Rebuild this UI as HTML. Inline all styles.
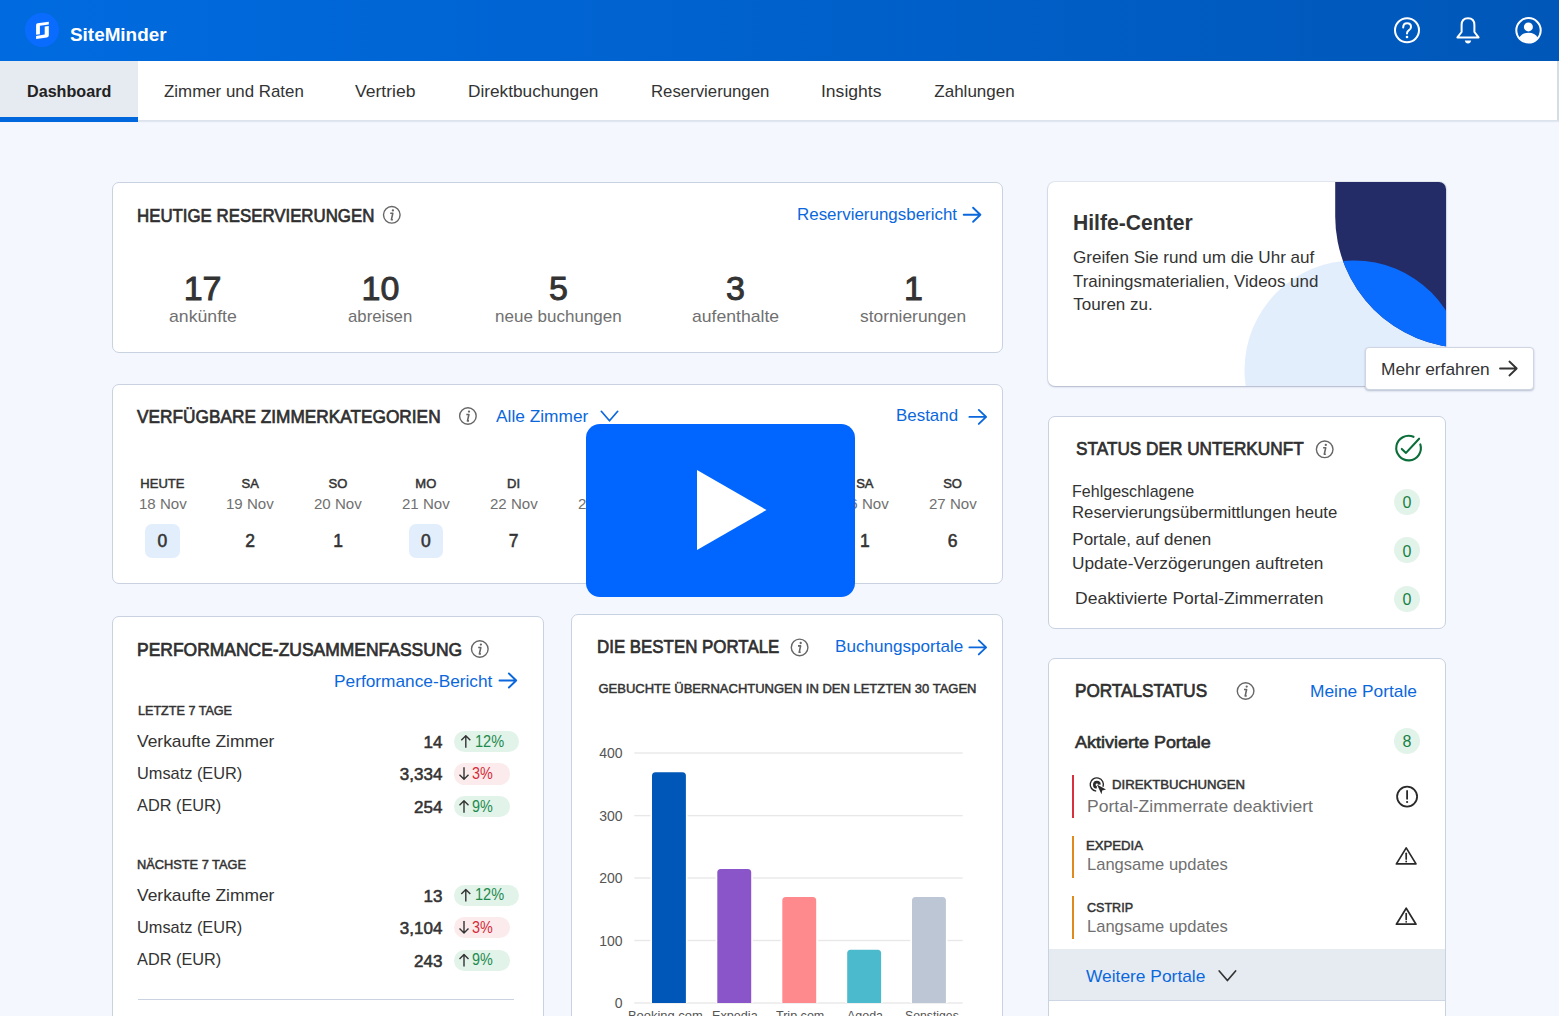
<!DOCTYPE html>
<html><head><meta charset="utf-8">
<style>
*{box-sizing:border-box;margin:0;padding:0}
html,body{width:1559px;height:1016px;overflow:hidden}
body{background:#f4f7fe;font-family:"Liberation Sans",sans-serif;color:#333;position:relative}
.a{position:absolute}
.t{position:absolute;line-height:1;white-space:nowrap}
.card{position:absolute;background:#fff;border:1px solid #c9d2e0;border-radius:7px}
svg{position:absolute;overflow:visible}
</style></head><body>
<div class="a" style="left:0;top:0;width:1559px;height:61px;background:linear-gradient(90deg,#006be0 0%,#0063d0 40%,#0057b8 100%)"></div>
<div class="a" style="left:25.2px;top:13.2px;width:34px;height:34px;border-radius:50%;background:#0a6cff"></div>
<svg style="left:0;top:0" width="1559" height="1016" viewBox="0 0 1559 1016">
<path fill="#fff" d="M36.1,25 Q36.1,23.6 37.6,23.3 L48.8,21.7 L48.8,24.5 L39.9,25.7 L39.9,34.3 L36.1,34.8 Z"/>
<path fill="#fff" d="M48.8,26.1 L44.7,26.6 L44.7,34.6 L36.1,35.9 L36.1,39 L46.9,37.5 Q48.8,37.2 48.8,35.6 Z"/>
<circle cx="1407" cy="30.3" r="12" fill="none" stroke="#fff" stroke-width="2"/>
<path d="M1403.2,27.5 Q1403.2,23.3 1407.1,23.3 Q1411,23.3 1411,26.9 Q1411,29 1408.7,30.4 Q1407,31.5 1407,33.5" fill="none" stroke="#fff" stroke-width="2" stroke-linecap="round"/>
<circle cx="1407" cy="37" r="1.3" fill="#fff"/>
<path d="M1468,18.2 Q1474.4,18.2 1474.4,25 L1474.4,32 L1478.6,37.4 L1457.4,37.4 L1461.6,32 L1461.6,25 Q1461.6,18.2 1468,18.2 Z" fill="none" stroke="#fff" stroke-width="2" stroke-linejoin="round"/>
<path d="M1464.8,40.4 L1471.2,40.4 Q1470.6,43.4 1468,43.4 Q1465.4,43.4 1464.8,40.4 Z" fill="#fff"/>
<circle cx="1528.5" cy="30.3" r="12.2" fill="none" stroke="#fff" stroke-width="2"/>
<circle cx="1528.4" cy="26.9" r="4.5" fill="#fff"/>
<path d="M1519.3,37.6 Q1522,32.8 1528.5,32.8 Q1535,32.8 1537.7,37.6 Q1534.5,42.3 1528.5,42.3 Q1522.5,42.3 1519.3,37.6 Z" fill="#fff"/>
</svg>
<div class="a" style="left:0;top:61px;width:1559px;height:60px;background:#fff;border-bottom:1px solid #dde3ec;border-right:2px solid #d6dce6;box-shadow:0 1px 1px rgba(120,140,170,.15)"></div>
<div class="a" style="left:0;top:61px;width:138px;height:59px;background:#e6eaf1"></div>
<div class="a" style="left:0;top:117px;width:138px;height:4.5px;background:#0067dc"></div>
<div class="card" style="left:112px;top:182px;width:891px;height:171px;"></div>
<div class="card" style="left:112px;top:384px;width:891px;height:200px;"></div>
<div class="card" style="left:112px;top:616px;width:432px;height:430px;"></div>
<div class="card" style="left:571px;top:614px;width:432px;height:430px;"></div>
<div class="card" style="left:1048px;top:416px;width:398px;height:213px;"></div>
<div class="card" style="left:1048px;top:658px;width:398px;height:400px;"></div>
<div class="a" style="left:1048.3px;top:182.2px;width:397.7px;height:203.8px;border-radius:7px;overflow:hidden;background:#fff;box-shadow:0 1px 2px rgba(40,60,100,.28),0 0 0 1px #e3e8f0">
<svg style="left:0;top:0" width="398" height="204" viewBox="1048 182 398 204">
<defs><clipPath id="nv"><path d="M1335.2,182 L1600,182 L1600,347.95 L1466.75,347.95 A131.55,131.55 0 0 1 1335.2,216.4 Z"/></clipPath></defs>
<circle cx="1354" cy="370" r="109.5" fill="#e3eefd"/>
<path d="M1335.2,182 L1600,182 L1600,347.95 L1466.75,347.95 A131.55,131.55 0 0 1 1335.2,216.4 Z" fill="#232c66"/>
<circle cx="1354" cy="370" r="109.5" fill="#0a6cff" clip-path="url(#nv)"/>
</svg></div>
<div class="a" style="left:1364.5px;top:346.5px;width:169.5px;height:43.5px;background:#fff;border:1px solid #cfd6e1;border-radius:4px;box-shadow:0 1px 2px rgba(40,60,100,.3)"></div>
<div class="a" style="left:145.2px;top:524.1px;width:34.5px;height:34.4px;border-radius:7px;background:#e3eefd"></div>
<div class="a" style="left:408.6px;top:524.1px;width:34.5px;height:34.4px;border-radius:7px;background:#e3eefd"></div>
<div class="a" style="left:453.8px;top:730.8px;width:64.8px;height:21.3px;border-radius:10.65px;background:#e2f3ea"></div>
<div class="a" style="left:453.8px;top:763.3px;width:55.9px;height:21.3px;border-radius:10.65px;background:#fcebec"></div>
<div class="a" style="left:453.8px;top:795.8px;width:55.9px;height:21.3px;border-radius:10.65px;background:#e2f3ea"></div>
<div class="a" style="left:453.8px;top:884.6px;width:64.8px;height:21.3px;border-radius:10.65px;background:#e2f3ea"></div>
<div class="a" style="left:453.8px;top:917.1px;width:55.9px;height:21.3px;border-radius:10.65px;background:#fcebec"></div>
<div class="a" style="left:453.8px;top:949.6px;width:55.9px;height:21.3px;border-radius:10.65px;background:#e2f3ea"></div>
<div class="a" style="left:138px;top:999.2px;width:376px;height:1.2px;background:#c9d3e2"></div>
<div class="a" style="left:1394px;top:488.5px;width:26px;height:26px;border-radius:50%;background:#e2f3ea"></div>
<div class="a" style="left:1394px;top:537.0px;width:26px;height:26px;border-radius:50%;background:#e2f3ea"></div>
<div class="a" style="left:1394px;top:585.5px;width:26px;height:26px;border-radius:50%;background:#e2f3ea"></div>
<div class="a" style="left:1394px;top:727.7px;width:26px;height:26px;border-radius:50%;background:#e2f3ea"></div>
<div class="a" style="left:1072px;top:774.7px;width:2.2px;height:43px;background:#d9303e"></div>
<div class="a" style="left:1072px;top:835.6px;width:2.2px;height:42.5px;background:#e08a1e"></div>
<div class="a" style="left:1072px;top:896.3px;width:2.2px;height:42.7px;background:#e08a1e"></div>
<div class="a" style="left:1049px;top:949.2px;width:396px;height:52px;background:#e6ebf2;border-bottom:1px solid #cdd6e4"></div>
<svg style="left:0;top:0" width="1559" height="1016" viewBox="0 0 1559 1016">
<rect x="634.3" y="752.3" width="328.4" height="1.4" fill="#e8e8e8"/>
<rect x="634.3" y="814.9" width="328.4" height="1.4" fill="#e8e8e8"/>
<rect x="634.3" y="877.3" width="328.4" height="1.4" fill="#e8e8e8"/>
<rect x="634.3" y="939.8" width="328.4" height="1.4" fill="#e8e8e8"/>
<rect x="634.3" y="1002.3" width="328.4" height="1.4" fill="#e8e8e8"/>
<rect x="650.4" y="770.6" width="37.1" height="232.39999999999995" fill="#fff"/>
<path d="M652,1003 L652,775.7 Q652,772.2 655.5,772.2 L682.4,772.2 Q685.9,772.2 685.9,775.7 L685.9,1003 Z" fill="#0057b8"/>
<rect x="715.6999999999999" y="867.4" width="37.1" height="135.6" fill="#fff"/>
<path d="M717.3,1003 L717.3,872.5 Q717.3,869 720.8,869 L747.6999999999999,869 Q751.1999999999999,869 751.1999999999999,872.5 L751.1999999999999,1003 Z" fill="#8a55c9"/>
<rect x="780.6999999999999" y="895.4" width="37.1" height="107.6" fill="#fff"/>
<path d="M782.3,1003 L782.3,900.5 Q782.3,897 785.8,897 L812.6999999999999,897 Q816.1999999999999,897 816.1999999999999,900.5 L816.1999999999999,1003 Z" fill="#ff8a8e"/>
<rect x="845.6" y="948.1999999999999" width="37.1" height="54.80000000000005" fill="#fff"/>
<path d="M847.2,1003 L847.2,953.3 Q847.2,949.8 850.7,949.8 L877.6,949.8 Q881.1,949.8 881.1,953.3 L881.1,1003 Z" fill="#4bbacc"/>
<rect x="910.4" y="895.4" width="37.1" height="107.6" fill="#fff"/>
<path d="M912,1003 L912,900.5 Q912,897 915.5,897 L942.4,897 Q945.9,897 945.9,900.5 L945.9,1003 Z" fill="#bdc6d4"/>
<circle cx="391.8" cy="214.8" r="8.3" fill="none" stroke="#666" stroke-width="1.4"/><circle cx="392.90000000000003" cy="210.4" r="1.15" fill="#666"/><path d="M390.2,213.3 L392.8,213.3 L391.40000000000003,219.70000000000002 L392.90000000000003,219.70000000000002" fill="none" stroke="#666" stroke-width="1.6" stroke-linejoin="round"/>
<path d="M963.7,214.75 L980.4000000000001,214.75 M973.1,207.75 L980.4000000000001,214.75 L973.1,221.75" fill="none" stroke="#0b68dc" stroke-width="1.9" stroke-linecap="round" stroke-linejoin="round"/>
<circle cx="467.9" cy="416" r="8.3" fill="none" stroke="#666" stroke-width="1.4"/><circle cx="469.0" cy="411.6" r="1.15" fill="#666"/><path d="M466.29999999999995,414.5 L468.9,414.5 L467.5,420.9 L469.0,420.9" fill="none" stroke="#666" stroke-width="1.6" stroke-linejoin="round"/>
<path d="M601.3,411.3 L609.5,420.8 L617.6999999999999,411.3" fill="none" stroke="#0b68dc" stroke-width="1.7" stroke-linecap="round" stroke-linejoin="round"/>
<path d="M969.4,416.9 L986.1,416.9 M978.8,409.9 L986.1,416.9 L978.8,423.9" fill="none" stroke="#0b68dc" stroke-width="1.9" stroke-linecap="round" stroke-linejoin="round"/>
<circle cx="479.8" cy="649" r="8.3" fill="none" stroke="#666" stroke-width="1.4"/><circle cx="480.90000000000003" cy="644.6" r="1.15" fill="#666"/><path d="M478.2,647.5 L480.8,647.5 L479.40000000000003,653.9 L480.90000000000003,653.9" fill="none" stroke="#666" stroke-width="1.6" stroke-linejoin="round"/>
<path d="M499.5,680.5 L516.2,680.5 M508.9,673.5 L516.2,680.5 L508.9,687.5" fill="none" stroke="#0b68dc" stroke-width="1.9" stroke-linecap="round" stroke-linejoin="round"/>
<circle cx="799.6" cy="647.4" r="8.3" fill="none" stroke="#666" stroke-width="1.4"/><circle cx="800.7" cy="643.0" r="1.15" fill="#666"/><path d="M798.0,645.9 L800.6,645.9 L799.2,652.3 L800.7,652.3" fill="none" stroke="#666" stroke-width="1.6" stroke-linejoin="round"/>
<path d="M969.4,647.4 L986.1,647.4 M978.8,640.4 L986.1,647.4 L978.8,654.4" fill="none" stroke="#0b68dc" stroke-width="1.9" stroke-linecap="round" stroke-linejoin="round"/>
<circle cx="1324.7" cy="449.3" r="8.3" fill="none" stroke="#666" stroke-width="1.4"/><circle cx="1325.8" cy="444.90000000000003" r="1.15" fill="#666"/><path d="M1323.1000000000001,447.8 L1325.7,447.8 L1324.3,454.2 L1325.8,454.2" fill="none" stroke="#666" stroke-width="1.6" stroke-linejoin="round"/>
<circle cx="1245.6" cy="691" r="8.3" fill="none" stroke="#666" stroke-width="1.4"/><circle cx="1246.6999999999998" cy="686.6" r="1.15" fill="#666"/><path d="M1244.0,689.5 L1246.6,689.5 L1245.1999999999998,695.9 L1246.6999999999998,695.9" fill="none" stroke="#666" stroke-width="1.6" stroke-linejoin="round"/>
<path d="M1500,368.5 L1516.7,368.5 M1509.4,361.5 L1516.7,368.5 L1509.4,375.5" fill="none" stroke="#333" stroke-width="1.8" stroke-linecap="round" stroke-linejoin="round"/>
<path d="M1413.5,436.8 A12.3,12.3 0 1 0 1420.3,444.4" fill="none" stroke="#0b6e3a" stroke-width="2.1" stroke-linecap="round"/>
<path d="M1401.8,448.9 L1406,452.9 L1419.1,438.7" fill="none" stroke="#0b6e3a" stroke-width="2.1" stroke-linecap="round" stroke-linejoin="round"/>
<circle cx="1407.1" cy="796.6" r="10" fill="none" stroke="#2a2a2a" stroke-width="1.8"/>
<path d="M1407.1,791 L1407.1,798.8" stroke="#2a2a2a" stroke-width="1.8" stroke-linecap="round"/><circle cx="1407.1" cy="802" r="1.1" fill="#2a2a2a"/>
<path d="M1406.2,847.9 L1416,863.9 L1396.4,863.9 Z" fill="none" stroke="#2a2a2a" stroke-width="1.7" stroke-linejoin="round"/>
<path d="M1406.2,853.3 L1406.2,859.1" stroke="#2a2a2a" stroke-width="1.7" stroke-linecap="round"/><circle cx="1406.2" cy="861.5" r="0.9" fill="#2a2a2a"/>
<path d="M1406.2,908.1999999999999 L1416,924.1999999999999 L1396.4,924.1999999999999 Z" fill="none" stroke="#2a2a2a" stroke-width="1.7" stroke-linejoin="round"/>
<path d="M1406.2,913.5999999999999 L1406.2,919.4" stroke="#2a2a2a" stroke-width="1.7" stroke-linecap="round"/><circle cx="1406.2" cy="921.8" r="0.9" fill="#2a2a2a"/>
<path d="M1096.2,791.1 A6.6,6.6 0 1 1 1103,786.8" fill="none" stroke="#2a2a2a" stroke-width="1.4"/>
<path d="M1096.8,787.3 A2.6,2.6 0 1 1 1099.5,784.6" fill="none" stroke="#2a2a2a" stroke-width="2.6"/>
<path d="M1096.9,784.4 L1106,789.4 L1102.2,790.5 L1101.5,794.3 Z" fill="#2a2a2a"/>
<path d="M1219.2,971 L1227.4,980.5 L1235.6000000000001,971" fill="none" stroke="#333" stroke-width="1.7" stroke-linecap="round" stroke-linejoin="round"/>
<path d="M465.8,747.8 L465.8,735.8 M461.3,740.3 L465.8,735.8 L470.3,740.3" fill="none" stroke="#333" stroke-width="1.4" stroke-linejoin="round"/>
<path d="M464,767.3 L464,779.3 M459.5,774.8 L464,779.3 L468.5,774.8" fill="none" stroke="#333" stroke-width="1.4" stroke-linejoin="round"/>
<path d="M464,812.8 L464,800.8 M459.5,805.3 L464,800.8 L468.5,805.3" fill="none" stroke="#333" stroke-width="1.4" stroke-linejoin="round"/>
<path d="M465.8,901.6 L465.8,889.6 M461.3,894.1 L465.8,889.6 L470.3,894.1" fill="none" stroke="#333" stroke-width="1.4" stroke-linejoin="round"/>
<path d="M464,921.1 L464,933.1 M459.5,928.6 L464,933.1 L468.5,928.6" fill="none" stroke="#333" stroke-width="1.4" stroke-linejoin="round"/>
<path d="M464,966.6 L464,954.6 M459.5,959.1 L464,954.6 L468.5,959.1" fill="none" stroke="#333" stroke-width="1.4" stroke-linejoin="round"/>
</svg>
<div class="t" style="left:70.24px;top:24.55px;font-size:19px;color:#fff;font-weight:700;transform:scaleX(0.9937);transform-origin:0 0;">SiteMinder</div>
<div class="t" style="left:26.65px;top:82.65px;font-size:17px;color:#222;font-weight:700;transform:scaleX(0.9493);transform-origin:0 0;">Dashboard</div>
<div class="t" style="left:163.52px;top:82.65px;font-size:17px;color:#333;transform:scaleX(0.9934);transform-origin:0 0;">Zimmer und Raten</div>
<div class="t" style="left:355.30px;top:82.65px;font-size:17px;color:#333;transform:scaleX(1.0309);transform-origin:0 0;">Vertrieb</div>
<div class="t" style="left:468.31px;top:82.65px;font-size:17px;color:#333;transform:scaleX(1.0144);transform-origin:0 0;">Direktbuchungen</div>
<div class="t" style="left:651.33px;top:82.65px;font-size:17px;color:#333;transform:scaleX(0.9860);transform-origin:0 0;">Reservierungen</div>
<div class="t" style="left:821.30px;top:82.65px;font-size:17px;color:#333;transform:scaleX(1.0309);transform-origin:0 0;">Insights</div>
<div class="t" style="left:934.32px;top:82.65px;font-size:17px;color:#333;">Zahlungen</div>
<div class="t" style="left:137.33px;top:206.78px;font-size:18.5px;color:#2f2f2f;-webkit-text-stroke:0.7px #2f2f2f;transform:scaleX(0.9102);transform-origin:0 0;">HEUTIGE RESERVIERUNGEN</div>
<div class="t" style="left:796.62px;top:206.05px;font-size:17px;color:#0b68dc;transform:scaleX(0.9964);transform-origin:0 0;">Reservierungsbericht</div>
<div class="t" style="left:183.69px;top:270.90px;font-size:34px;color:#333;-webkit-text-stroke:0.95px #333;">17</div>
<div class="t" style="left:168.69px;top:307.55px;font-size:17px;color:#707070;transform:scaleX(1.0395);transform-origin:0 0;">ankünfte</div>
<div class="t" style="left:361.59px;top:270.90px;font-size:34px;color:#333;-webkit-text-stroke:0.95px #333;">10</div>
<div class="t" style="left:348.38px;top:307.55px;font-size:17px;color:#707070;transform:scaleX(0.9850);transform-origin:0 0;">abreisen</div>
<div class="t" style="left:549.04px;top:270.90px;font-size:34px;color:#333;-webkit-text-stroke:0.95px #333;">5</div>
<div class="t" style="left:495.02px;top:307.55px;font-size:17px;color:#707070;">neue buchungen</div>
<div class="t" style="left:726.04px;top:270.90px;font-size:34px;color:#333;-webkit-text-stroke:0.95px #333;">3</div>
<div class="t" style="left:691.95px;top:307.55px;font-size:17px;color:#707070;transform:scaleX(1.0353);transform-origin:0 0;">aufenthalte</div>
<div class="t" style="left:903.94px;top:270.90px;font-size:34px;color:#333;-webkit-text-stroke:0.95px #333;">1</div>
<div class="t" style="left:860.31px;top:307.55px;font-size:17px;color:#707070;transform:scaleX(1.0214);transform-origin:0 0;">stornierungen</div>
<div class="t" style="left:137.11px;top:408.38px;font-size:18.5px;color:#2f2f2f;-webkit-text-stroke:0.7px #2f2f2f;transform:scaleX(0.9327);transform-origin:0 0;">VERFÜGBARE ZIMMERKATEGORIEN</div>
<div class="t" style="left:496.31px;top:407.65px;font-size:17px;color:#0b68dc;transform:scaleX(1.0189);transform-origin:0 0;">Alle Zimmer</div>
<div class="t" style="left:895.62px;top:407.35px;font-size:17px;color:#0b68dc;transform:scaleX(0.9946);transform-origin:0 0;">Bestand</div>
<div class="t" style="left:140.37px;top:477.15px;font-size:13px;color:#333;-webkit-text-stroke:0.49px #333;">HEUTE</div>
<div class="t" style="left:138.55px;top:495.95px;font-size:15px;color:#707070;transform:scaleX(1.0036);transform-origin:0 0;">18 Nov</div>
<div class="t" style="left:157.53px;top:532.52px;font-size:17.5px;color:#333;-webkit-text-stroke:0.55px #333;">0</div>
<div class="t" style="left:241.53px;top:477.15px;font-size:13px;color:#333;-webkit-text-stroke:0.49px #333;">SA</div>
<div class="t" style="left:226.35px;top:495.95px;font-size:15px;color:#707070;transform:scaleX(1.0036);transform-origin:0 0;">19 Nov</div>
<div class="t" style="left:245.33px;top:532.52px;font-size:17.5px;color:#333;-webkit-text-stroke:0.55px #333;">2</div>
<div class="t" style="left:328.60px;top:477.15px;font-size:13px;color:#333;-webkit-text-stroke:0.49px #333;">SO</div>
<div class="t" style="left:314.15px;top:495.95px;font-size:15px;color:#707070;transform:scaleX(1.0036);transform-origin:0 0;">20 Nov</div>
<div class="t" style="left:333.13px;top:532.52px;font-size:17.5px;color:#333;-webkit-text-stroke:0.55px #333;">1</div>
<div class="t" style="left:415.32px;top:477.15px;font-size:13px;color:#333;-webkit-text-stroke:0.49px #333;">MO</div>
<div class="t" style="left:401.95px;top:495.95px;font-size:15px;color:#707070;transform:scaleX(1.0036);transform-origin:0 0;">21 Nov</div>
<div class="t" style="left:420.93px;top:532.52px;font-size:17.5px;color:#333;-webkit-text-stroke:0.55px #333;">0</div>
<div class="t" style="left:507.10px;top:477.15px;font-size:13px;color:#333;-webkit-text-stroke:0.49px #333;">DI</div>
<div class="t" style="left:489.75px;top:495.95px;font-size:15px;color:#707070;transform:scaleX(1.0036);transform-origin:0 0;">22 Nov</div>
<div class="t" style="left:508.73px;top:532.52px;font-size:17.5px;color:#333;-webkit-text-stroke:0.55px #333;">7</div>
<div class="t" style="left:594.17px;top:477.15px;font-size:13px;color:#333;-webkit-text-stroke:0.49px #333;">MI</div>
<div class="t" style="left:577.55px;top:495.95px;font-size:15px;color:#707070;transform:scaleX(1.0036);transform-origin:0 0;">23 Nov</div>
<div class="t" style="left:596.53px;top:532.52px;font-size:17.5px;color:#333;-webkit-text-stroke:0.55px #333;">4</div>
<div class="t" style="left:679.45px;top:477.15px;font-size:13px;color:#333;-webkit-text-stroke:0.49px #333;">DO</div>
<div class="t" style="left:665.35px;top:495.95px;font-size:15px;color:#707070;transform:scaleX(1.0036);transform-origin:0 0;">24 Nov</div>
<div class="t" style="left:684.33px;top:532.52px;font-size:17.5px;color:#333;-webkit-text-stroke:0.55px #333;">3</div>
<div class="t" style="left:768.33px;top:477.15px;font-size:13px;color:#333;-webkit-text-stroke:0.49px #333;">FR</div>
<div class="t" style="left:753.15px;top:495.95px;font-size:15px;color:#707070;transform:scaleX(1.0036);transform-origin:0 0;">25 Nov</div>
<div class="t" style="left:772.13px;top:532.52px;font-size:17.5px;color:#333;-webkit-text-stroke:0.55px #333;">5</div>
<div class="t" style="left:856.13px;top:477.15px;font-size:13px;color:#333;-webkit-text-stroke:0.49px #333;">SA</div>
<div class="t" style="left:840.95px;top:495.95px;font-size:15px;color:#707070;transform:scaleX(1.0036);transform-origin:0 0;">26 Nov</div>
<div class="t" style="left:859.93px;top:532.52px;font-size:17.5px;color:#333;-webkit-text-stroke:0.55px #333;">1</div>
<div class="t" style="left:943.20px;top:477.15px;font-size:13px;color:#333;-webkit-text-stroke:0.49px #333;">SO</div>
<div class="t" style="left:928.75px;top:495.95px;font-size:15px;color:#707070;transform:scaleX(1.0036);transform-origin:0 0;">27 Nov</div>
<div class="t" style="left:947.73px;top:532.52px;font-size:17.5px;color:#333;-webkit-text-stroke:0.55px #333;">6</div>
<div class="t" style="left:137.10px;top:640.88px;font-size:18.5px;color:#2f2f2f;-webkit-text-stroke:0.7px #2f2f2f;transform:scaleX(0.9441);transform-origin:0 0;">PERFORMANCE-ZUSAMMENFASSUNG</div>
<div class="t" style="left:334.31px;top:673.05px;font-size:17px;color:#0b68dc;transform:scaleX(1.0160);transform-origin:0 0;">Performance-Bericht</div>
<div class="t" style="left:137.50px;top:704.15px;font-size:13px;color:#333;-webkit-text-stroke:0.49px #333;transform:scaleX(0.9687);transform-origin:0 0;">LETZTE 7 TAGE</div>
<div class="t" style="left:137.49px;top:858.15px;font-size:13px;color:#333;-webkit-text-stroke:0.49px #333;transform:scaleX(0.9841);transform-origin:0 0;">NÄCHSTE 7 TAGE</div>
<div class="t" style="left:137.30px;top:732.65px;font-size:17px;color:#333;transform:scaleX(1.0241);transform-origin:0 0;">Verkaufte Zimmer</div>
<div class="t" style="left:423.46px;top:733.95px;font-size:17px;color:#333;-webkit-text-stroke:0.55px #333;">14</div>
<div class="t" style="left:137.35px;top:764.85px;font-size:17px;color:#333;transform:scaleX(0.9612);transform-origin:0 0;">Umsatz (EUR)</div>
<div class="t" style="left:399.83px;top:766.15px;font-size:17px;color:#333;-webkit-text-stroke:0.55px #333;">3,334</div>
<div class="t" style="left:137.35px;top:797.25px;font-size:17px;color:#333;transform:scaleX(0.9597);transform-origin:0 0;">ADR (EUR)</div>
<div class="t" style="left:414.00px;top:798.55px;font-size:17px;color:#333;-webkit-text-stroke:0.55px #333;">254</div>
<div class="t" style="left:137.30px;top:886.55px;font-size:17px;color:#333;transform:scaleX(1.0241);transform-origin:0 0;">Verkaufte Zimmer</div>
<div class="t" style="left:423.46px;top:887.85px;font-size:17px;color:#333;-webkit-text-stroke:0.55px #333;">13</div>
<div class="t" style="left:137.35px;top:918.85px;font-size:17px;color:#333;transform:scaleX(0.9612);transform-origin:0 0;">Umsatz (EUR)</div>
<div class="t" style="left:399.83px;top:920.15px;font-size:17px;color:#333;-webkit-text-stroke:0.55px #333;">3,104</div>
<div class="t" style="left:137.35px;top:951.25px;font-size:17px;color:#333;transform:scaleX(0.9597);transform-origin:0 0;">ADR (EUR)</div>
<div class="t" style="left:414.00px;top:952.55px;font-size:17px;color:#333;-webkit-text-stroke:0.55px #333;">243</div>
<div class="t" style="left:596.82px;top:638.38px;font-size:18.5px;color:#2f2f2f;-webkit-text-stroke:0.7px #2f2f2f;transform:scaleX(0.9127);transform-origin:0 0;">DIE BESTEN PORTALE</div>
<div class="t" style="left:835.02px;top:638.15px;font-size:17px;color:#0b68dc;transform:scaleX(1.0061);transform-origin:0 0;">Buchungsportale</div>
<div class="t" style="left:598.48px;top:682.05px;font-size:13px;color:#333;-webkit-text-stroke:0.49px #333;">GEBUCHTE ÜBERNACHTUNGEN IN DEN LETZTEN 30 TAGEN</div>
<div class="t" style="left:599.20px;top:746.30px;font-size:14px;color:#555;">400</div>
<div class="t" style="left:599.20px;top:808.90px;font-size:14px;color:#555;">300</div>
<div class="t" style="left:599.20px;top:871.30px;font-size:14px;color:#555;">200</div>
<div class="t" style="left:599.20px;top:933.80px;font-size:14px;color:#555;">100</div>
<div class="t" style="left:614.76px;top:996.30px;font-size:14px;color:#555;">0</div>
<div class="t" style="left:628.28px;top:1008.73px;font-size:13.5px;color:#555;transform:scaleX(0.9576);transform-origin:0 0;">Booking.com</div>
<div class="t" style="left:712.49px;top:1008.73px;font-size:13.5px;color:#555;transform:scaleX(0.9368);transform-origin:0 0;">Expedia</div>
<div class="t" style="left:775.50px;top:1008.73px;font-size:13.5px;color:#555;transform:scaleX(0.9286);transform-origin:0 0;">Trip.com</div>
<div class="t" style="left:846.50px;top:1008.73px;font-size:13.5px;color:#555;transform:scaleX(0.9219);transform-origin:0 0;">Agoda</div>
<div class="t" style="left:904.51px;top:1008.73px;font-size:13.5px;color:#555;transform:scaleX(0.9070);transform-origin:0 0;">Sonstiges</div>
<div class="t" style="left:1073.16px;top:212.40px;font-size:22px;color:#333;font-weight:700;transform:scaleX(0.9599);transform-origin:0 0;">Hilfe-Center</div>
<div class="t" style="left:1073.32px;top:248.85px;font-size:17px;color:#333;transform:scaleX(1.0056);transform-origin:0 0;">Greifen Sie rund um die Uhr auf</div>
<div class="t" style="left:1073.32px;top:272.55px;font-size:17px;color:#333;transform:scaleX(0.9947);transform-origin:0 0;">Trainingsmaterialien, Videos und</div>
<div class="t" style="left:1073.32px;top:296.35px;font-size:17px;color:#333;">Touren zu.</div>
<div class="t" style="left:1380.81px;top:360.85px;font-size:17px;color:#333;transform:scaleX(1.0178);transform-origin:0 0;">Mehr erfahren</div>
<div class="t" style="left:1075.71px;top:440.07px;font-size:18.5px;color:#2f2f2f;-webkit-text-stroke:0.7px #2f2f2f;transform:scaleX(0.9294);transform-origin:0 0;">STATUS DER UNTERKUNFT</div>
<div class="t" style="left:1072.36px;top:482.55px;font-size:17px;color:#333;transform:scaleX(0.9444);transform-origin:0 0;">Fehlgeschlagene</div>
<div class="t" style="left:1072.33px;top:504.05px;font-size:17px;color:#333;transform:scaleX(0.9852);transform-origin:0 0;">Reservierungsübermittlungen heute</div>
<div class="t" style="left:1072.32px;top:531.05px;font-size:17px;color:#333;">Portale, auf denen</div>
<div class="t" style="left:1072.31px;top:554.75px;font-size:17px;color:#333;transform:scaleX(1.0152);transform-origin:0 0;">Update-Verzögerungen auftreten</div>
<div class="t" style="left:1074.90px;top:590.25px;font-size:17px;color:#333;transform:scaleX(1.0311);transform-origin:0 0;">Deaktivierte Portal-Zimmerraten</div>
<div class="t" style="left:1074.71px;top:682.27px;font-size:18.5px;color:#2f2f2f;-webkit-text-stroke:0.7px #2f2f2f;transform:scaleX(0.9272);transform-origin:0 0;">PORTALSTATUS</div>
<div class="t" style="left:1309.91px;top:682.75px;font-size:17px;color:#0b68dc;transform:scaleX(1.0200);transform-origin:0 0;">Meine Portale</div>
<div class="t" style="left:1074.68px;top:733.95px;font-size:17px;color:#2e2e2e;-webkit-text-stroke:0.6px #2e2e2e;transform:scaleX(1.0571);transform-origin:0 0;">Aktivierte Portale</div>
<div class="t" style="left:1112.47px;top:778.25px;font-size:13px;color:#333;-webkit-text-stroke:0.49px #333;transform:scaleX(1.0120);transform-origin:0 0;">DIREKTBUCHUNGEN</div>
<div class="t" style="left:1086.80px;top:797.85px;font-size:17px;color:#707070;transform:scaleX(1.0307);transform-origin:0 0;">Portal-Zimmerrate deaktiviert</div>
<div class="t" style="left:1086.47px;top:839.25px;font-size:13px;color:#333;-webkit-text-stroke:0.49px #333;transform:scaleX(1.0123);transform-origin:0 0;">EXPEDIA</div>
<div class="t" style="left:1086.84px;top:856.25px;font-size:17px;color:#707070;transform:scaleX(0.9738);transform-origin:0 0;">Langsame updates</div>
<div class="t" style="left:1086.50px;top:900.55px;font-size:13px;color:#333;-webkit-text-stroke:0.49px #333;transform:scaleX(0.9650);transform-origin:0 0;">CSTRIP</div>
<div class="t" style="left:1086.84px;top:918.35px;font-size:17px;color:#707070;transform:scaleX(0.9738);transform-origin:0 0;">Langsame updates</div>
<div class="t" style="left:1085.71px;top:968.35px;font-size:17px;color:#0b68dc;transform:scaleX(1.0217);transform-origin:0 0;">Weitere Portale</div>
<div class="t" style="left:475.42px;top:733.50px;font-size:16px;color:#1f8a4d;transform:scaleX(0.9105);transform-origin:0 0;">12%</div>
<div class="t" style="left:472.23px;top:766.00px;font-size:16px;color:#d42b3a;transform:scaleX(0.8972);transform-origin:0 0;">3%</div>
<div class="t" style="left:472.23px;top:798.50px;font-size:16px;color:#1f8a4d;transform:scaleX(0.8972);transform-origin:0 0;">9%</div>
<div class="t" style="left:475.42px;top:887.30px;font-size:16px;color:#1f8a4d;transform:scaleX(0.9105);transform-origin:0 0;">12%</div>
<div class="t" style="left:472.23px;top:919.80px;font-size:16px;color:#d42b3a;transform:scaleX(0.8972);transform-origin:0 0;">3%</div>
<div class="t" style="left:472.23px;top:952.30px;font-size:16px;color:#1f8a4d;transform:scaleX(0.8972);transform-origin:0 0;">9%</div>
<div class="t" style="left:1402.55px;top:495.40px;font-size:16px;color:#1a7f44;">0</div>
<div class="t" style="left:1402.55px;top:543.90px;font-size:16px;color:#1a7f44;">0</div>
<div class="t" style="left:1402.55px;top:592.40px;font-size:16px;color:#1a7f44;">0</div>
<div class="t" style="left:1402.55px;top:734.30px;font-size:16px;color:#1a7f44;">8</div>
<div class="a" style="left:586px;top:424px;width:268.5px;height:173px;border-radius:14px;background:#0066ff"></div>
<svg style="left:0;top:0" width="1559" height="1016" viewBox="0 0 1559 1016"><path d="M697,470 L766.5,510 L697,550 Z" fill="#fff"/></svg>
</body></html>
